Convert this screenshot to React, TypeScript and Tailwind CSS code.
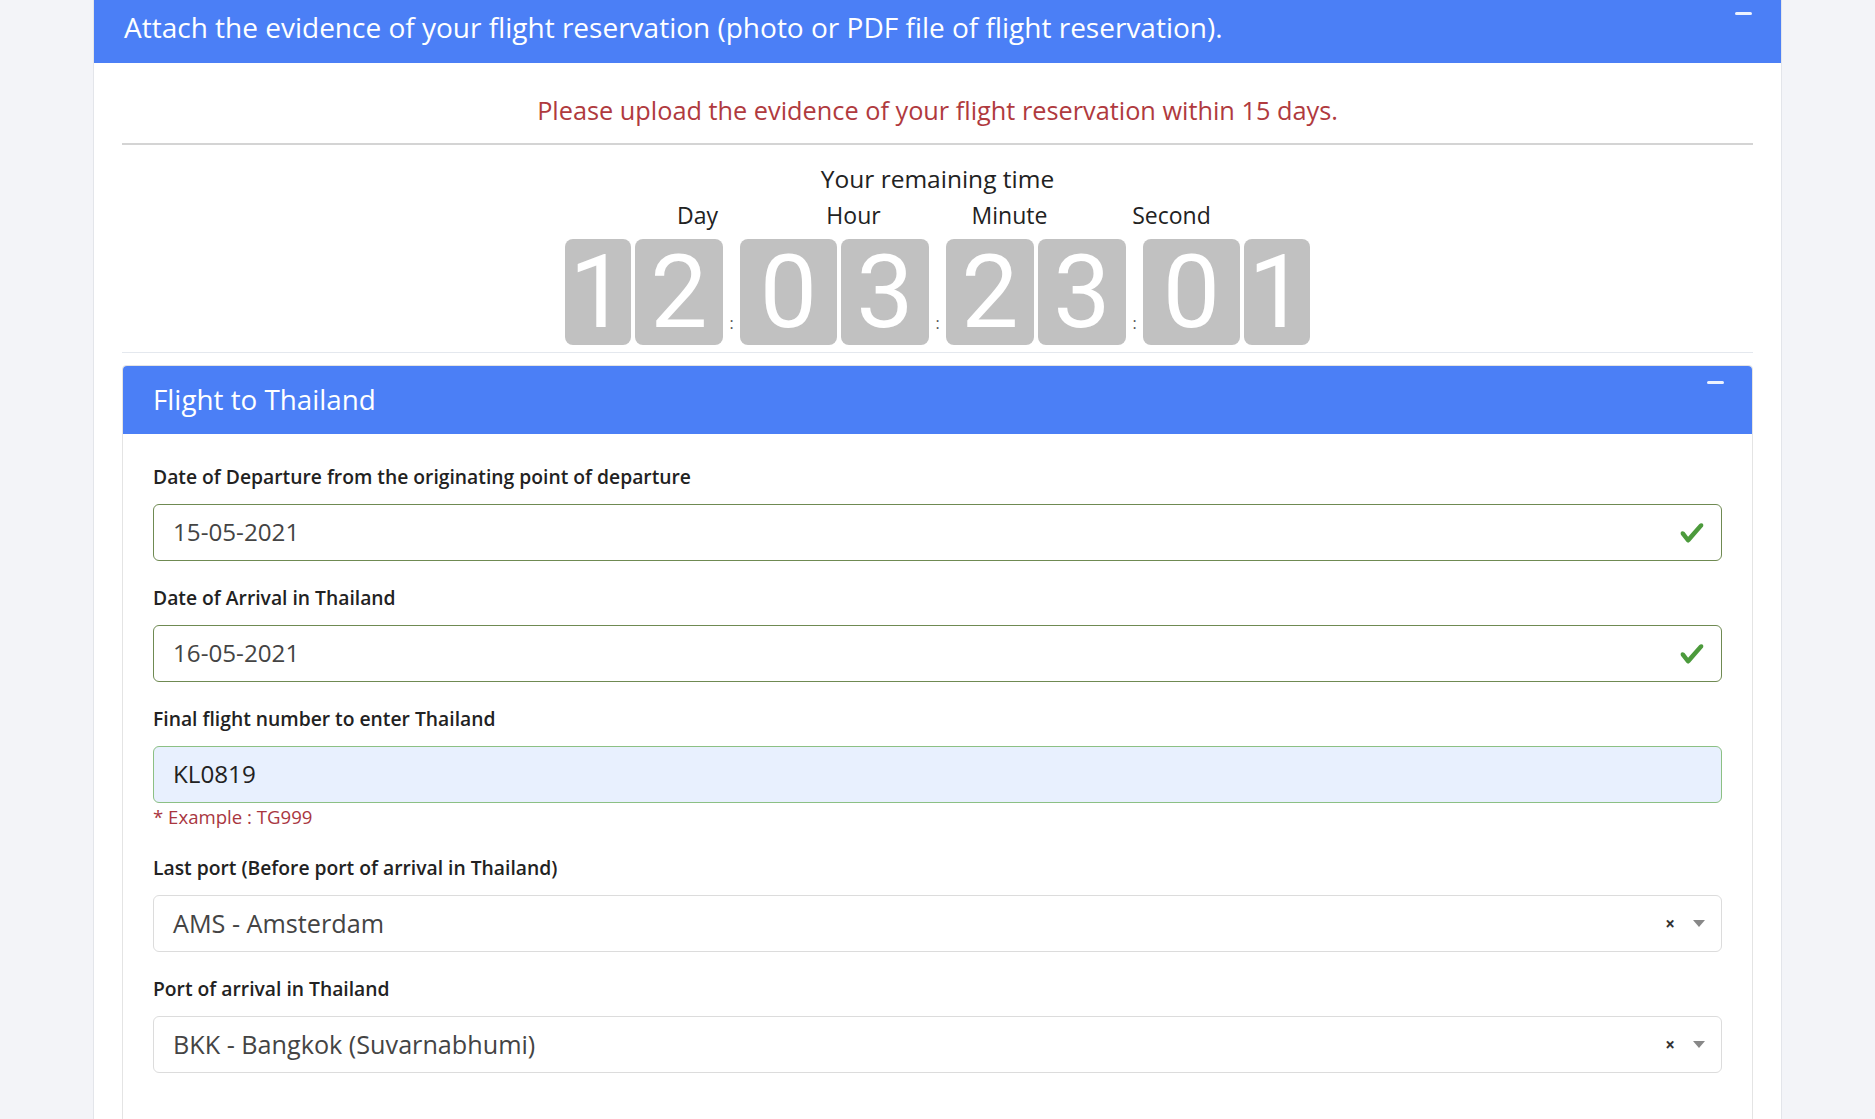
import { Fragment } from 'react';

const countdown = [
  ['1', '2'],
  ['0', '3'],
  ['2', '3'],
  ['0', '1'],
];

const unitLabels = [
  { text: 'Day', w: 'w-[150px]' },
  { text: 'Hour', w: 'w-[162px]' },
  { text: 'Minute', w: 'w-[150px]' },
  { text: 'Second', w: 'w-[174px]' },
];

function digitWidth(d: string) {
  if (d === '1') return 'w-[66px]';
  if (d === '0') return 'w-[97px]';
  return 'w-[88px]';
}

function Minus() {
  return <span className="block h-[3px] w-[17px] rounded-full bg-white/90" />;
}

function Check() {
  return (
    <svg viewBox="0 0 8 8" className="h-[26px] w-[26px]" fill="#4c9a3c">
      <path d="M2.3 6.73L.6 4.53c-.4-1.04.46-1.4 1.1-.8l1.1 1.4 3.4-3.8c.6-.63 1.6-.27 1.2.7l-4 4.6c-.43.5-.8.4-1.1.1z" />
    </svg>
  );
}

function Label({ children }: { children: string }) {
  return <p className="mb-[13px] text-[19.3px] leading-[28px] font-semibold text-[#222]">{children}</p>;
}

function ValidInput({ value }: { value: string }) {
  return (
    <div className="flex h-[57px] items-center justify-between rounded-[6px] border border-[#6f8a52] bg-white pl-[19px] pr-[16px]">
      <span className="text-[24.2px] text-[#444]">{value}</span>
      <Check />
    </div>
  );
}

function SelectBox({ value }: { value: string }) {
  return (
    <div className="flex h-[57px] items-center justify-between rounded-[6px] border border-[#dcdcdc] bg-white pl-[19px] pr-[16px]">
      <span className="text-[25.2px] text-[#444]">{value}</span>
      <div className="flex items-center gap-[18px]">
        <span className="text-[17px] leading-none font-bold text-[#333]">×</span>
        <span className="h-0 w-0 border-x-[6px] border-t-[7px] border-x-transparent border-t-[#888]" />
      </div>
    </div>
  );
}

export default function App() {
  return (
    <div className="min-h-screen bg-[#f3f4f8] [font-family:'Open_Sans',sans-serif]">
      <section className="mx-auto min-h-[1119px] w-[1689px] border-x border-[#e3e5ea] bg-white">
        <header className="flex h-[63px] justify-between bg-[#4b7ff6] pl-[30px] pr-[29px] pt-[9px]">
          <h2 className="text-[28px] leading-[36px] text-white">
            Attach the evidence of your flight reservation (photo or PDF file of flight reservation).
          </h2>
          <div className="pt-[3px]">
            <Minus />
          </div>
        </header>

        <div className="px-[28px]">
          <p className="pt-[30px] text-center text-[25.3px] leading-[34px] text-[#b03a3e]">
            Please upload the evidence of your flight reservation within 15 days.
          </p>
          <hr className="mt-[16px] border-t-2 border-[#d4d4d4]" />

          {/* countdown: heading, unit captions, then digit tiles */}
          <div className="pt-[17px] text-center text-[#222]">
            <p className="text-[24.5px] leading-[34px]">Your remaining time</p>
            <div className="mt-[3px] flex justify-center pl-[6px]">
              {unitLabels.map((u) => (
                <span key={u.text} className={`${u.w} text-[23px] leading-[32px]`}>
                  {u.text}
                </span>
              ))}
            </div>
            <div className="mt-[8px] flex justify-center">
              {countdown.map((pair, i) => (
                <Fragment key={i}>
                  {i > 0 && (
                    <span className="flex w-[17px] items-end justify-center pb-[14px] text-[16px] leading-none text-[#555]">
                      :
                    </span>
                  )}
                  <div className="flex gap-[4px]">
                    {pair.map((d, j) => (
                      <div
                        key={j}
                        className={`${digitWidth(d)} flex h-[106px] items-center justify-center rounded-[8px] bg-[#c1c1c1] text-[102px] leading-[106px] text-white [font-family:Roboto,sans-serif]`}
                      >
                        {d}
                      </div>
                    ))}
                  </div>
                </Fragment>
              ))}
            </div>
          </div>
          <hr className="mt-[7px] border-[#e4e8ee]" />

          <div className="mt-[12px] rounded-t-[4px] border border-[#e4e4e4]">
            <div className="flex h-[68px] items-start justify-between rounded-t-[4px] bg-[#4b7ff6] pl-[30px] pr-[28px]">
              <h3 className="pt-[15px] text-[27.8px] leading-[36px] text-white">Flight to Thailand</h3>
              <div className="pt-[15px]">
                <Minus />
              </div>
            </div>

            <div className="px-[30px] pt-[29px] pb-[48px]">
              <Label>Date of Departure from the originating point of departure</Label>
              <ValidInput value="15-05-2021" />

              <div className="mt-[23px]">
                <Label>Date of Arrival in Thailand</Label>
                <ValidInput value="16-05-2021" />
              </div>

              <div className="mt-[23px]">
                <Label>Final flight number to enter Thailand</Label>
                <div className="flex h-[57px] items-center rounded-[6px] border border-[#8cc084] bg-[#e8f0fe] pl-[19px]">
                  <span className="text-[24.2px] text-[#222]">KL0819</span>
                </div>
                <p className="mt-[1px] text-[18.6px] leading-[26px] text-[#a9363f]">* Example : TG999</p>
              </div>

              <div className="mt-[24px]">
                <Label>Last port (Before port of arrival in Thailand)</Label>
                <SelectBox value="AMS - Amsterdam" />
              </div>

              <div className="mt-[23px]">
                <Label>Port of arrival in Thailand</Label>
                <SelectBox value="BKK - Bangkok (Suvarnabhumi)" />
              </div>
            </div>
          </div>
        </div>
      </section>
    </div>
  );
}
